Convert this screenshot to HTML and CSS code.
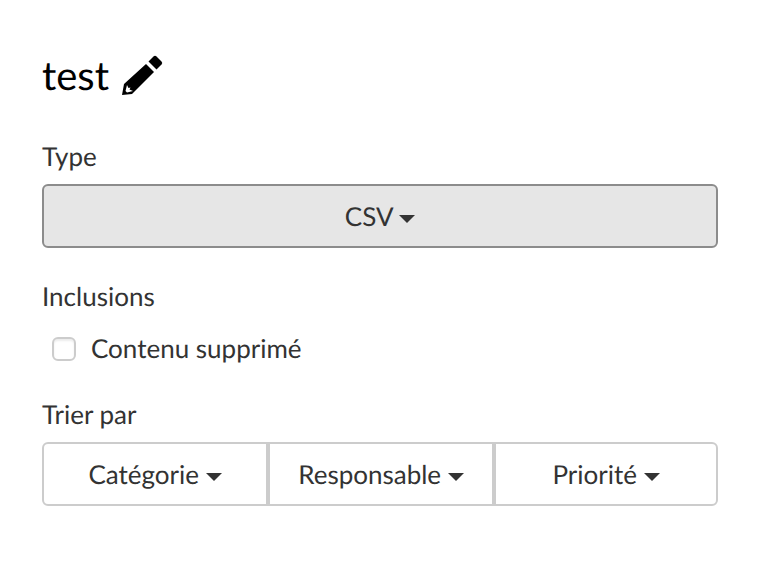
FILE: index.html
```html
<!DOCTYPE html>
<html lang="fr">
<head>
    <meta charset="UTF-8">
    <title>Export</title>
    <link rel="stylesheet" href="styles.css">
</head>
<body>
    <main class="form">
        <h1 class="title">test
            <svg class="pencil" viewBox="0 0 41 40" width="41" height="40">
                <path d="M26.500 6.500l5-5q1.500-1.500 3 0l5 5q1.500 1.500 0 3l-5 5z"/>
                <path fill-rule="evenodd" d="M24 9l8 8-22 22-10 1 2-11zM5 30l-1.500 6 1.500 1.500 6-1.500-3.500-1.500 1-2-2 .5z"/>
            </svg>
        </h1>

        <div class="field">
            <label class="label">Type</label>
            <button class="btn btn-active">CSV <span class="caret"></span></button>
        </div>

        <div class="field">
            <label class="label">Inclusions</label>
            <label class="check"><span class="box"></span>Contenu supprimé</label>
        </div>

        <div class="field">
            <label class="label">Trier par</label>
            <div class="btn-group">
                <button class="btn">Catégorie <span class="caret"></span></button>
                <button class="btn">Responsable <span class="caret"></span></button>
                <button class="btn">Priorité <span class="caret"></span></button>
            </div>
        </div>
    </main>
</body>
</html>
```

FILE: styles.css
```css
* {
    margin: 0;
    padding: 0;
    box-sizing: border-box;
}

body {
    font-family: Lato, sans-serif;
    font-size: 26px;
    color: #333;
    background: #fff;
    text-rendering: geometricPrecision;
}

.form {
    padding: 50px 48px 0 42px;
}

.title {
    display: flex;
    align-items: center;
    gap: 13px;
    font-size: 40px;
    font-weight: 400;
    line-height: 50px;
    color: #000;
    margin-bottom: 40px;
}

.pencil {
    fill: #000;
}

.field {
    margin-bottom: 32px;
}

.label {
    display: block;
    line-height: 32px;
    margin-bottom: 12px;
}

.btn {
    display: block;
    width: 100%;
    height: 64px;
    font-family: inherit;
    font-size: 26px;
    color: #333;
    background: #fff;
    border: 2px solid #ccc;
    border-radius: 6px;
    text-rendering: geometricPrecision;
}

.btn-active {
    background: #e6e6e6;
    border-color: #8c8c8c;
}

.caret {
    display: inline-block;
    vertical-align: middle;
    width: 0;
    height: 0;
    border-top: 8px solid #333;
    border-left: 8px solid transparent;
    border-right: 8px solid transparent;
}

.check {
    display: flex;
    align-items: center;
    gap: 15px;
    margin-top: 19px;
    padding: 0 0 1px 10px;
    line-height: 34px;
}

.box {
    width: 24px;
    height: 24px;
    margin-top: 2px;
    border: 2px solid #ccc;
    border-radius: 6px;
    background: #fff;
    box-shadow: inset 0 2px 2px rgba(0, 0, 0, 0.075);
}

.btn-group {
    display: grid;
    grid-template-columns: 226px 226px 224px;
}

.btn-group .btn {
    border-radius: 0;
}

.btn-group .btn:first-child {
    border-radius: 6px 0 0 6px;
}

.btn-group .btn:last-child {
    border-radius: 0 6px 6px 0;
}
```
